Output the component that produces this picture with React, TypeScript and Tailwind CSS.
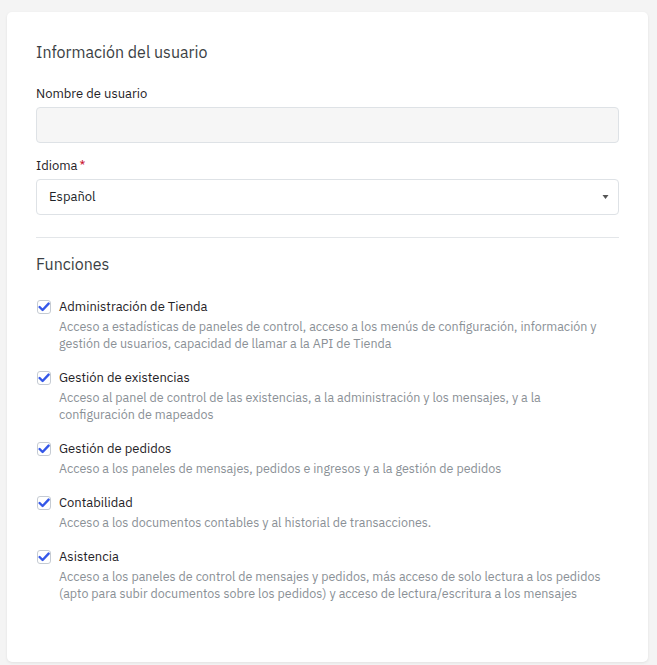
import React, { useState } from 'react';

const FUNCTIONS = [
    {
        title: 'Administración de Tienda',
        desc: 'Acceso a estadísticas de paneles de control, acceso a los menús de configuración, información y gestión de usuarios, capacidad de llamar a la API de Tienda',
    },
    {
        title: 'Gestión de existencias',
        desc: 'Acceso al panel de control de las existencias, a la administración y los mensajes, y a la configuración de mapeados',
    },
    {
        title: 'Gestión de pedidos',
        desc: 'Acceso a los paneles de mensajes, pedidos e ingresos y a la gestión de pedidos',
    },
    {
        title: 'Contabilidad',
        desc: 'Acceso a los documentos contables y al historial de transacciones.',
    },
    {
        title: 'Asistencia',
        desc: 'Acceso a los paneles de control de mensajes y pedidos, más acceso de solo lectura a los pedidos (apto para subir documentos sobre los pedidos) y acceso de lectura/escritura a los mensajes',
    },
];

const CheckBox: React.FC<{ checked: boolean; onChange: () => void }> = ({ checked, onChange }) => (
    <button
        type="button"
        onClick={onChange}
        className="mt-[2px] w-[14px] h-[14px] shrink-0 rounded-[3px] border border-[#c5cbd3] bg-white flex items-center justify-center"
    >
        {checked && (
            <svg viewBox="0 0 12 12" className="w-[12px] h-[12px]">
                <path d="M1.6 6 L4.6 9 L10.6 2.6" fill="none" stroke="#3457e8" strokeWidth="2.4" strokeLinecap="round" strokeLinejoin="round" />
            </svg>
        )}
    </button>
);

export default function App() {
    const [checked, setChecked] = useState<boolean[]>(FUNCTIONS.map(() => true));

    const toggle = (i: number) => setChecked(prev => prev.map((c, j) => (j === i ? !c : c)));

    return (
        <div className="min-h-screen bg-[#f4f4f4] pt-[12px] pl-[7px] pr-[9px] pb-[5px] font-['IBM_Plex_Sans','Noto_Sans',sans-serif]">
            <div className="bg-white rounded-[5px] shadow-[0_1px_3px_rgba(0,0,0,0.08)] px-[29px] pt-[30px] pb-[60px] text-[#212529]">
                <h2 className="text-[16px] leading-[20px] text-[#3b3f44] font-normal">Información del usuario</h2>

                <label className="block mt-[23px] text-[13px] leading-[18px] font-normal text-[#1f2327]">Nombre de usuario</label>
                <input
                    disabled
                    className="mt-[4px] w-full h-[36px] rounded-[4px] border border-[#dee2e6] bg-[#f6f6f6] px-3 text-[13px]"
                />

                <label className="block mt-[14px] text-[13px] leading-[18px] font-normal text-[#1f2327]">
                    Idioma<span className="text-[#c8102e] ml-[2px]">*</span>
                </label>
                <div className="relative mt-[4px]">
                    <select className="appearance-none w-full h-[36px] rounded-[4px] border border-[#dee2e6] bg-white pl-[12px] pr-8 text-[13px] text-[#212529] outline-none">
                        <option>Español</option>
                    </select>
                    <svg viewBox="0 0 6 4" className="absolute right-[10px] top-[16px] w-[7px] h-[4px] pointer-events-none">
                        <path d="M0 0 H6 L3 4 Z" fill="#555" />
                    </svg>
                </div>

                <div className="mt-[22px] border-t border-[#e3e6e9]" />

                <h2 className="mt-[16px] text-[16px] leading-[20px] text-[#3b3f44] font-normal">Funciones</h2>

                <div className="mt-[24px] flex flex-col gap-[17px]">
                    {FUNCTIONS.map((f, i) => (
                        <div key={f.title} className="flex gap-[8px] pl-[1px]">
                            <CheckBox checked={checked[i]} onChange={() => toggle(i)} />
                            <div>
                                <div className="text-[13px] leading-[18px] font-normal text-[#1f2327]">{f.title}</div>
                                <div className="mt-[2px] text-[12.5px] leading-[17px] text-[#8a9096]">{f.desc}</div>
                            </div>
                        </div>
                    ))}
                </div>
            </div>
        </div>
    );
}
